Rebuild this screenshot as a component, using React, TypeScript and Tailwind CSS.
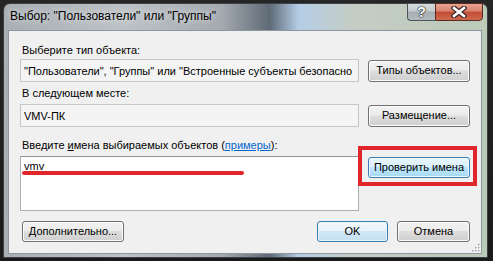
import { Fragment } from "react";

const font = "font-['Liberation_Sans',Arial,sans-serif]";

const btn =
    "flex items-center justify-center whitespace-nowrap rounded-[3px] border border-[#707070] bg-[linear-gradient(#f2f2f2_0%,#ebebeb_45%,#dddddd_50%,#cfcfcf_100%)] shadow-[inset_0_0_0_1px_#fcfcfc] text-[11px] leading-none text-black";

const btnDefault =
    "flex items-center justify-center whitespace-nowrap rounded-[3px] border border-[#3c7fb1] bg-[linear-gradient(#f4f9fc_0%,#e7f2f9_45%,#d2e7f4_50%,#c4e0f2_100%)] shadow-[inset_0_0_0_1px_#e6f4fc] text-[11px] leading-none text-black";

const btnHot =
    "flex items-center justify-center whitespace-nowrap rounded-[3px] border border-[#3c7fb1] bg-[linear-gradient(#eaf6fd_0%,#d9f0fc_45%,#bee6fd_50%,#a7d9f5_100%)] shadow-[inset_0_0_0_1px_#f0f9ff] text-[11px] leading-none text-black";

const CloseGlyph = () => (
    <svg width="16" height="12" viewBox="0 0 16 12">
        <path d="M3 2 L13 10 M13 2 L3 10" stroke="#3b2a26" strokeWidth="5" strokeLinecap="square" />
        <path d="M3 2 L13 10 M13 2 L3 10" stroke="#ffffff" strokeWidth="2.6" strokeLinecap="square" />
    </svg>
);

const Grip = () => (
    <svg width="10" height="10" viewBox="0 0 10 10">
        {[
            [8, 2],
            [5, 5],
            [8, 5],
            [2, 8],
            [5, 8],
            [8, 8],
        ].map(([x, y], i) => (
            <Fragment key={i}>
                <rect x={x} y={y} width="1.5" height="1.5" fill="#fff" />
                <rect x={x - 1} y={y - 1} width="1.5" height="1.5" fill="#a0a0a0" />
            </Fragment>
        ))}
    </svg>
);

const App = () => {
    return (
        <div className={`w-[493px] h-[261px] bg-[linear-gradient(#262626,#1a1a1a)] pl-[3px] pt-[3px] overflow-hidden ${font}`}>
            <div className="relative w-[485px] h-[255px] rounded-t-[7px] border border-[#3c4046] bg-[linear-gradient(to_right,#a9aeb3_0%,#bdc2c6_25%,#a4aab0_45%,#5f6a76_55%,#b4cde6_61%,#c4cdc4_72%,#bccab8_100%)] flex flex-col">
                {/* title bar */}
                <div className="h-[26px] flex justify-between items-start">
                    <span className="mt-[4px] ml-[6px] text-[12px] leading-[16px] text-black [text-shadow:0_0_6px_rgba(255,255,255,0.9)]">
                        Выбор: "Пользователи" или "Группы"
                    </span>
                    <div className="flex mr-[4px] -mt-px">
                        <div className="w-[28px] h-[18px] rounded-bl-[4px] border border-[#4d5359] border-r-0 bg-[linear-gradient(#d6dadd_0%,#c4cacd_45%,#a5adb2_50%,#b2bcc0_100%)] flex items-center justify-center">
                            <span className="text-[14px] font-bold leading-none text-white [text-shadow:0_0_1px_#222,0_0_1px_#222,0_0_2px_#222]">
                                ?
                            </span>
                        </div>
                        <div className="w-[48px] h-[18px] rounded-br-[4px] border border-[#5a2a22] bg-[linear-gradient(#e8a592_0%,#d7826d_45%,#c24b35_50%,#cf6a4c_100%)] flex items-center justify-center">
                            <CloseGlyph />
                        </div>
                    </div>
                </div>

                {/* client area */}
                <div className="relative ml-[4px] mr-[5px] h-[224px] border border-[#8d969e] bg-[#f0f0f0] px-[11px] pt-[11px] text-[11px] leading-[16px] text-black">
                    <div className="pl-[2px]">Выберите тип объекта:</div>
                    <div className="mt-px flex items-center justify-between">
                        <div className="w-[339px] h-[23px] border border-[#c4c6ca] bg-[#f4f4f4] px-[3px] flex items-center overflow-hidden whitespace-nowrap">
                            "Пользователи", "Группы" или "Встроенные субъекты безопасно
                        </div>
                        <div className={`${btn} w-[102px] h-[22px]`}>Типы объектов...</div>
                    </div>

                    <div className="mt-[3px] pl-[2px]">В следующем месте:</div>
                    <div className="mt-[3px] flex items-center justify-between">
                        <div className="w-[339px] h-[23px] border border-[#c4c6ca] bg-[#f4f4f4] px-[3px] flex items-center">
                            VMV-ПК
                        </div>
                        <div className={`${btn} w-[102px] h-[22px]`}>Размещение...</div>
                    </div>

                    <div className="mt-[10px] pl-[2px]">
                        Введите <span className="underline">и</span>мена выбираемых объектов (
                        <span className="text-[#0066cc] underline">примеры</span>):
                    </div>
                    <div className="mt-[3px] flex items-start justify-between">
                        <div className="w-[339px] h-[55px] border border-[#abadb3] border-t-[#8f939b] bg-white px-[3px] pt-px">
                            vmv
                        </div>
                        <div className={`${btnHot} mt-px w-[102px] h-[21px]`}>Проверить имена</div>
                    </div>

                    <div className="mt-[10px] flex items-center">
                        <div className={`${btn} ml-[2px] w-[102px] h-[21px]`}>Дополнительно...</div>
                        <div className={`${btnDefault} ml-auto w-[71px] h-[21px]`}>OK</div>
                        <div className={`${btn} ml-[9px] w-[73px] h-[21px]`}>Отмена</div>
                    </div>

                    <div className="absolute right-0 bottom-0">
                        <Grip />
                    </div>

                    {/* annotations */}
                    <div className="absolute left-[13px] top-[140px] w-[222px] h-[4px] rounded-full bg-[#e0262b]" />
                    <div className="absolute left-[349px] top-[115px] w-[119px] h-[40px] border-[4px] border-[#e0262b]" />
                </div>
            </div>
        </div>
    );
};

export default App;
